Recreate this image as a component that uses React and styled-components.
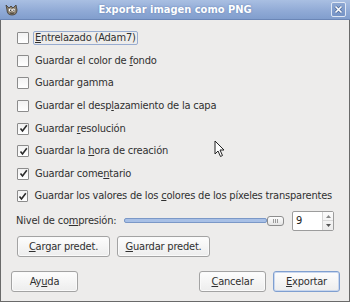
import React from 'react';
import styled, { createGlobalStyle } from 'styled-components';

const Global = createGlobalStyle`
  html, body { margin: 0; padding: 0; background: #edeceb; }
  body { font-family: "DejaVu Sans Condensed", "DejaVu Sans", sans-serif; }
`;

const Window = styled.div`
  position: relative;
  width: 350px;
  height: 302px;
  box-sizing: border-box;
  background: #edeceb;
  border: 1px solid #6a6a6a;
  border-top: none;
  display: flex;
  flex-direction: column;
  font-size: 11px;
  letter-spacing: -0.2px;
  color: #303030;
`;

const TitleBar = styled.div`
  height: 20px;
  margin: 0 -1px;
  box-sizing: border-box;
  background: linear-gradient(#a9bfe2, #8fa9d5 60%, #819ecd);
  border-bottom: 1px solid #6b86b6;
  display: flex;
  align-items: center;
  padding: 0 4px 0 5px;
`;

const Title = styled.div`
  flex: 1;
  text-align: center;
  color: #fff;
  font-weight: bold;
  font-size: 11px;
  letter-spacing: 0;
  text-shadow: 0 0 2px #5f7cae;
`;

const CloseBtn = styled.div`
  width: 13px;
  height: 13px;
  border: 1px solid #dfe7f4;
  border-radius: 2px;
  background: linear-gradient(#8ea8d3, #7593c6);
  display: flex;
  align-items: center;
  justify-content: center;
`;

const Content = styled.div`
  flex: 1;
  display: flex;
  flex-direction: column;
  padding: 7px 15px 9px 15px;
`;

const Options = styled.div`
  display: flex;
  flex-direction: column;
`;

const Row = styled.div`
  height: 22.6px;
  display: flex;
  align-items: center;
  gap: 4px;
`;

const Box = styled.div`
  width: 12px;
  height: 12px;
  margin-left: 1px;
  box-sizing: border-box;
  border: 1px solid #8c8c8c;
  border-radius: 1px;
  background: linear-gradient(#f2f2f2, #fff);
  display: flex;
  align-items: center;
  justify-content: center;
`;

const Label = styled.span`
  padding: 0 1px;
  border: 1px solid ${(p) => (p.$focus ? '#98acd0' : 'transparent')};
  border-radius: 2px;
  line-height: 12px;
  white-space: nowrap;
`;

const U = styled.span`
  text-decoration: underline;
  text-underline-offset: 1px;
`;

const SliderRow = styled.div`
  margin-top: 3px;
  height: 20px;
  display: flex;
  align-items: center;
`;

const SliderLabel = styled.span`
  width: 108px;
`;

const Trough = styled.div`
  flex: 1;
  height: 12px;
  display: flex;
  align-items: center;
`;

const Fill = styled.div`
  flex: 1;
  height: 3px;
  border: 1px solid #7b98c7;
  border-radius: 2px;
  background: #a8c0e6;
`;

const Thumb = styled.div`
  width: 15px;
  height: 8px;
  border: 1px solid #8d8d8d;
  border-radius: 3px;
  background: linear-gradient(#fdfdfd, #e4e4e4);
  display: flex;
  align-items: center;
  justify-content: center;
  gap: 1px;
  & span {
    width: 1px;
    height: 4px;
    background: #9a9a9a;
  }
`;

const Spin = styled.div`
  margin-left: 8px;
  width: 42px;
  height: 20px;
  box-sizing: border-box;
  border: 1px solid #9c9c9c;
  border-radius: 2px;
  background: #fff;
  display: flex;
`;

const SpinText = styled.div`
  flex: 1;
  padding-left: 3px;
  display: flex;
  align-items: center;
  color: #222;
`;

const SpinArrows = styled.div`
  width: 10px;
  display: flex;
  flex-direction: column;
  border-left: 1px solid #d4d4d4;
  background: linear-gradient(#fbfbfb, #ececec);
  & div {
    flex: 1;
    display: flex;
    align-items: center;
    justify-content: center;
  }
  & div + div { border-top: 1px solid #d8d8d8; }
`;

const ButtonRow = styled.div`
  margin-top: 5px;
  display: flex;
  gap: 7px;
  margin-left: 1px;
`;

const Button = styled.div`
  height: 21px;
  width: ${(p) => p.$w}px;
  box-sizing: border-box;
  border: 1px solid ${(p) => (p.$default ? '#7f9fd0' : '#a3a3a3')};
  border-radius: 3px;
  background: linear-gradient(#fdfdfd, #ededed);
  box-shadow: inset 0 0 0 1px ${(p) => (p.$default ? '#c9d7ee' : '#fafafa')};
  display: flex;
  align-items: center;
  justify-content: center;
  color: #303030;
`;

const Actions = styled.div`
  margin-top: auto;
  margin-left: -5px;
  margin-right: -6px;
  display: flex;
  gap: 7px;
  & > :first-child { margin-right: auto; }
`;

const Cursor = styled.svg`
  position: absolute;
  left: 213px;
  top: 140px;
`;

const Check = () => (
  <svg width="9" height="9" viewBox="0 0 9 9">
    <path d="M1.5 4.5 L3.5 7 L7.8 1.2" fill="none" stroke="#2a2a2a" strokeWidth="1.6" />
  </svg>
);

const Wilber = () => (
  <svg width="14" height="12" viewBox="0 0 14 12">
    <path d="M1 1 L4 4 L6 2 L8 4 L11 1 L12 6 Q12 11 7 11 Q2 11 2 6 Z" fill="#8a7f6d" stroke="#3f3a32" strokeWidth="0.8" />
    <circle cx="5.2" cy="6" r="1.5" fill="#fff" />
    <circle cx="8.6" cy="6" r="1.5" fill="#fff" />
    <circle cx="5.5" cy="6.2" r="0.6" fill="#000" />
    <circle cx="8.9" cy="6.2" r="0.6" fill="#000" />
    <path d="M5 9 Q7 10 9 9" stroke="#3f3a32" strokeWidth="0.8" fill="none" />
  </svg>
);

const options = [
  { label: <><U>E</U>ntrelazado (Adam7)</>, checked: false, focus: true },
  { label: <>Guardar el color de <U>f</U>ondo</>, checked: false },
  { label: <>Guardar gamma</>, checked: false },
  { label: <>Guardar el desp<U>l</U>azamiento de la capa</>, checked: false },
  { label: <>Guardar <U>r</U>esolución</>, checked: true },
  { label: <>Guardar la <U>h</U>ora de creación</>, checked: true },
  { label: <>Guardar come<U>n</U>tario</>, checked: true },
  { label: <>Guardar los valores de los <U>c</U>olores de los píxeles transparentes</>, checked: true },
];

export default function App() {
  return (
    <>
      <Global />
      <Window>
        <TitleBar>
          <Wilber />
          <Title>Exportar imagen como PNG</Title>
          <CloseBtn>
            <svg width="9" height="9" viewBox="0 0 9 9">
              <path d="M1.5 1.5 L7.5 7.5 M7.5 1.5 L1.5 7.5" stroke="#4c6899" strokeWidth="3" />
              <path d="M1.5 1.5 L7.5 7.5 M7.5 1.5 L1.5 7.5" stroke="#fff" strokeWidth="1.6" />
            </svg>
          </CloseBtn>
        </TitleBar>
        <Content>
          <Options>
            {options.map((o, i) => (
              <Row key={i}>
                <Box>{o.checked && <Check />}</Box>
                <Label $focus={o.focus}>{o.label}</Label>
              </Row>
            ))}
          </Options>
          <SliderRow>
            <SliderLabel>Nivel de co<U>m</U>presión:</SliderLabel>
            <Trough>
              <Fill />
              <Thumb><span /><span /><span /></Thumb>
            </Trough>
            <Spin>
              <SpinText>9</SpinText>
              <SpinArrows>
                <div>
                  <svg width="5" height="3" viewBox="0 0 5 3"><path d="M0 3 L2.5 0 L5 3 Z" fill="#888" /></svg>
                </div>
                <div>
                  <svg width="5" height="3" viewBox="0 0 5 3"><path d="M0 0 L2.5 3 L5 0 Z" fill="#555" /></svg>
                </div>
              </SpinArrows>
            </Spin>
          </SliderRow>
          <ButtonRow>
            <Button $w={93}><U>C</U>argar predet.</Button>
            <Button $w={93}><U>G</U>uardar predet.</Button>
          </ButtonRow>
          <Actions>
            <Button $w={67}>Ay<U>u</U>da</Button>
            <Button $w={67}><U>C</U>ancelar</Button>
            <Button $w={67} $default><U>E</U>xportar</Button>
          </Actions>
        </Content>
        <Cursor width="12" height="18" viewBox="0 0 12 18">
          <path d="M1 1 L1 14 L4 11 L6.5 16.5 L8.5 15.5 L6 10 L10 10 Z" fill="#fff" stroke="#222" strokeWidth="1" strokeLinejoin="round" />
        </Cursor>
      </Window>
    </>
  );
}
